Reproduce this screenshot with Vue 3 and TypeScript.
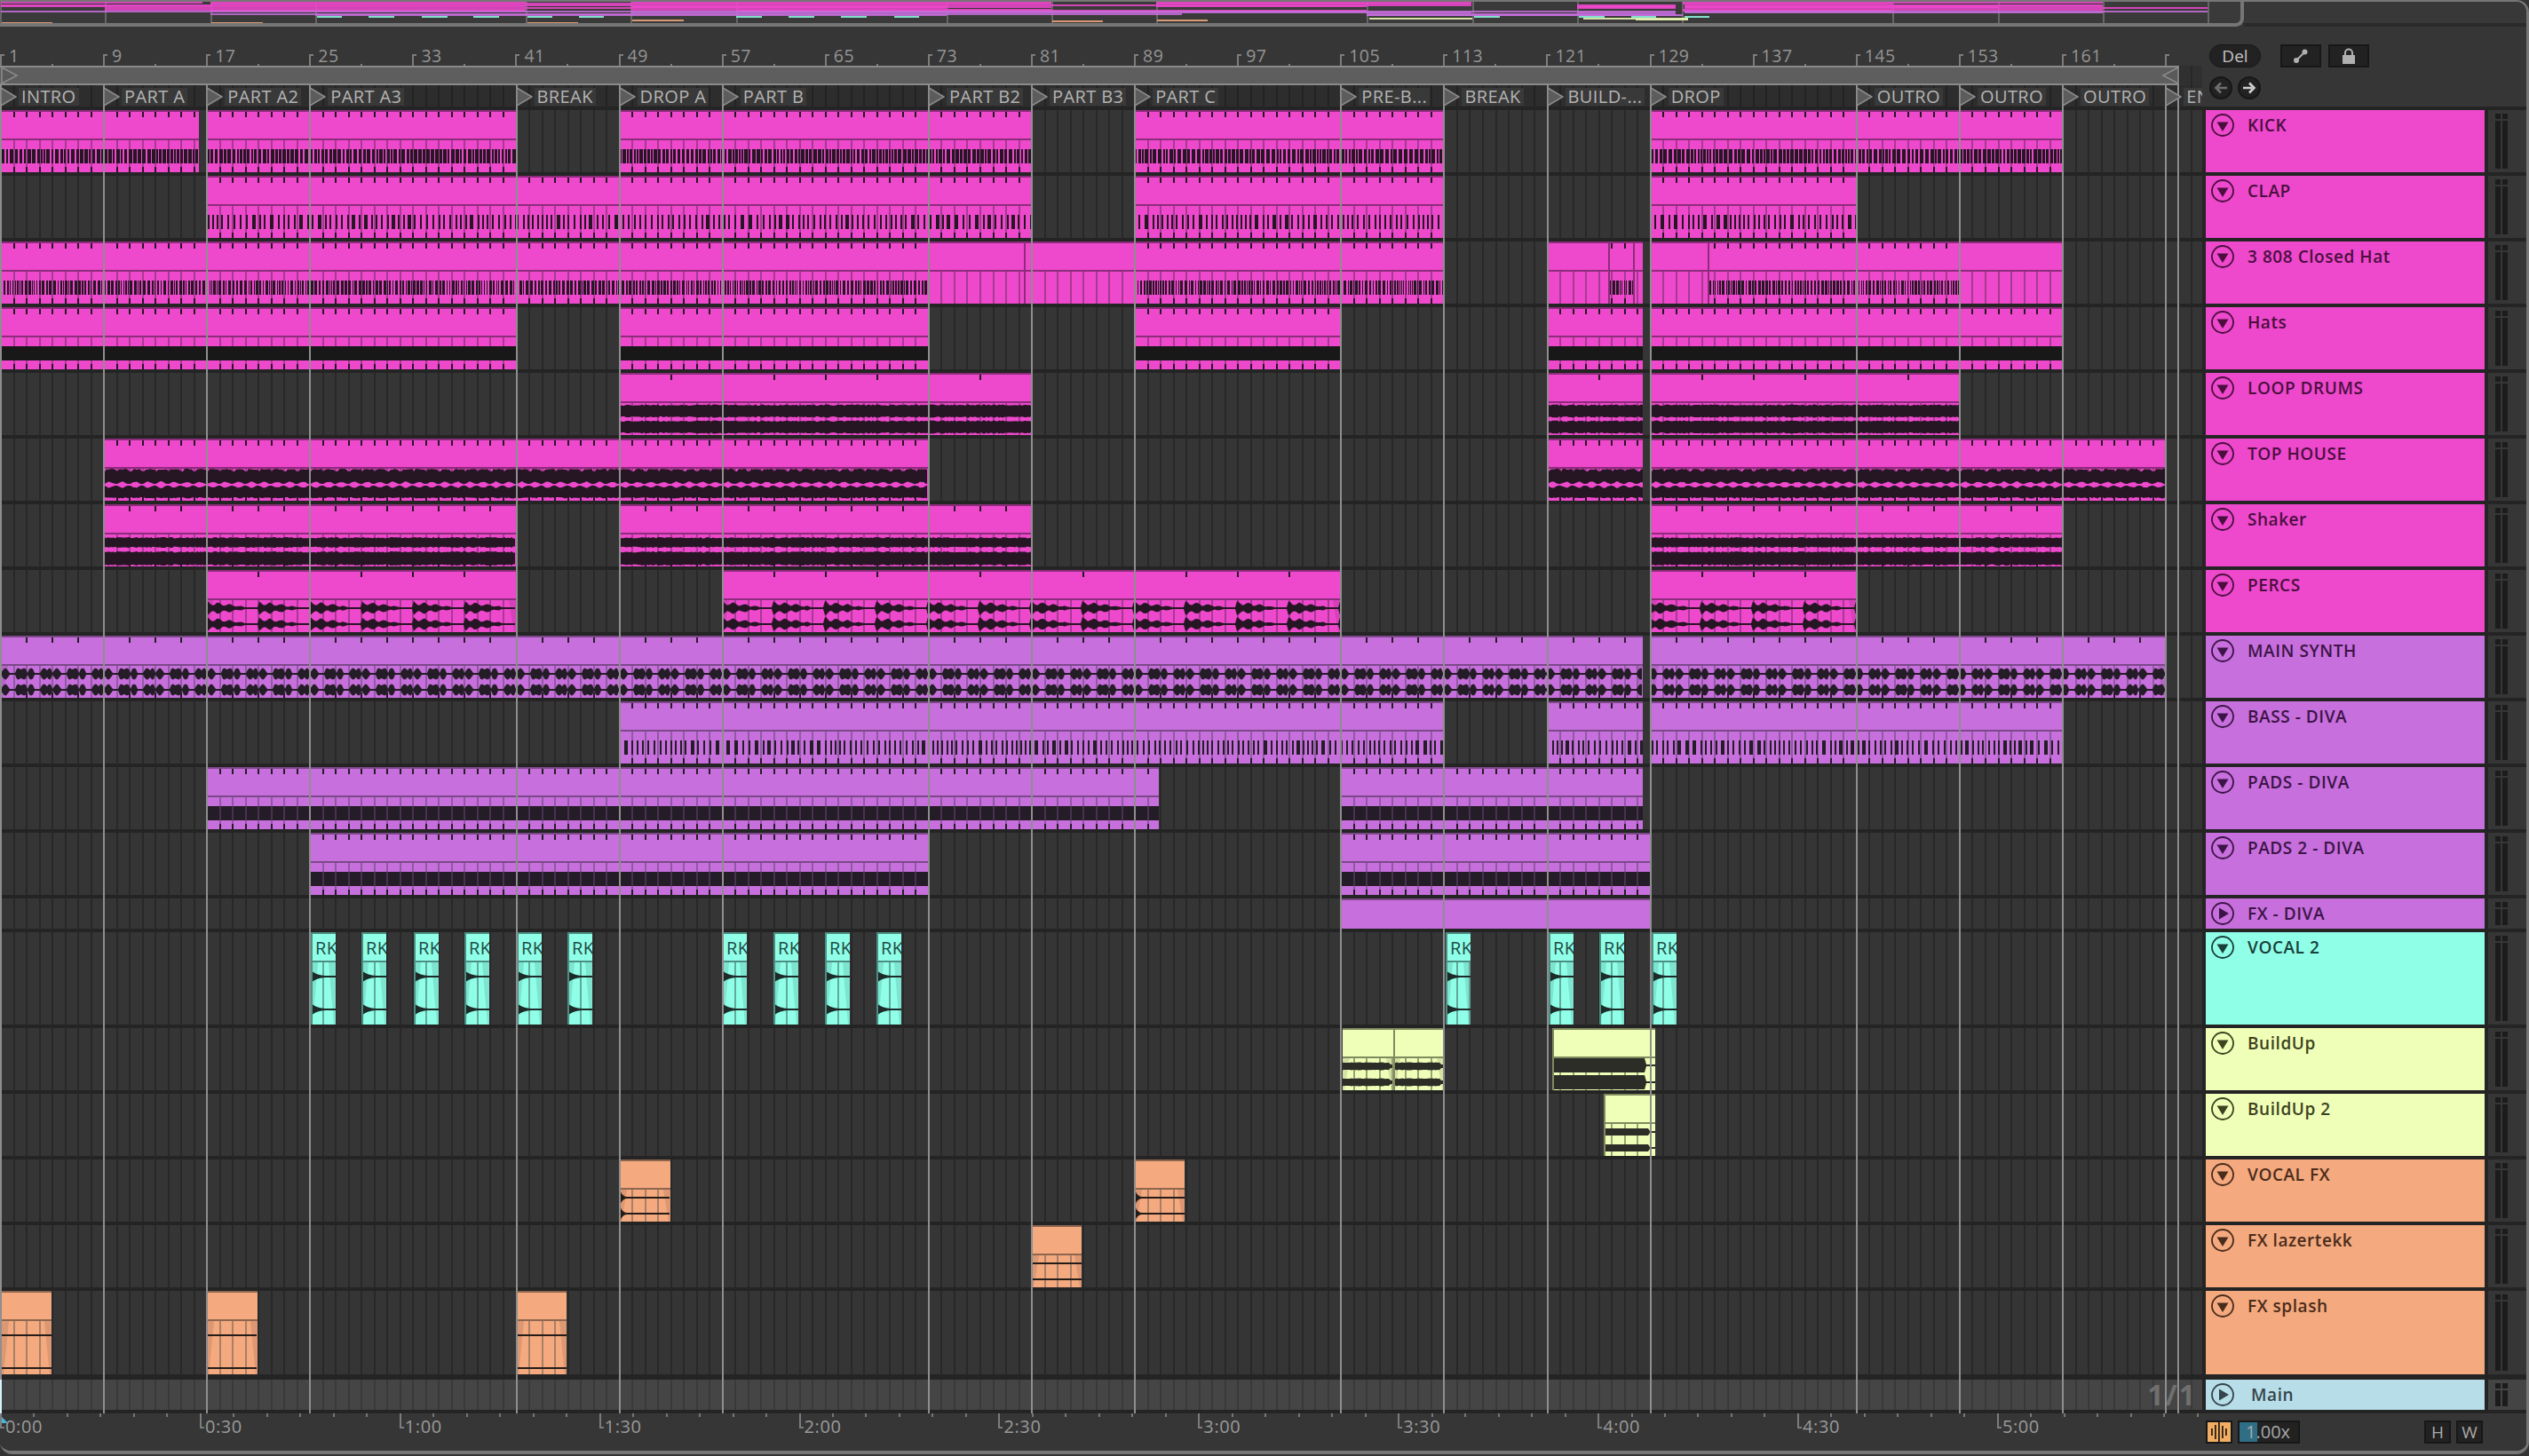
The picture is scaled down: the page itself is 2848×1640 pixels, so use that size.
<script setup lang="ts">
type Kind = 'none' | 'heavy' | 'dense' | 'sparse' | 'solid' | 'pads' | 'loop' | 'shaker' | 'top' | 'percs' | 'synth' | 'rk' | 'hit' | 'line' | 'build' | 'buildsolid' | 'build2'
interface ClipDef { a: number; b: number; kind: Kind; step: number; edge?: boolean; label?: string }
interface TrackDef { name: string; color: string; h: number; open?: boolean; clips: ClipDef[] }

const BAR = 14.513
const X = (bar: number) => BAR * (bar - 1)
const G1 = 1850
const G2 = 1860
const c = (a: number, b: number, kind: Kind, step: number, edge = false, label = ''): ClipDef => ({ a, b, kind, step, edge, label })
const span = (list: [number, number][], kind: Kind, step: number) => list.map(([a, b]) => c(a, b, kind, step))

const rkStarts = [350, 407, 466, 523, 582, 639, 813, 871, 929, 987, 1628, 1744, 1801, 1860]

const trackDefs: TrackDef[] = [
  { name: 'KICK', color: 'pink', h: 70, clips: span([[X(1) + 1, 224], [X(17), X(41)], [X(49), X(81)], [X(89), X(113)], [X(129), X(161)]], 'heavy', 1) },
  { name: 'CLAP', color: 'pink', h: 70, clips: span([[X(17), X(81)], [X(89), X(113)], [X(129), X(145)]], 'sparse', 1) },
  { name: '3 808 Closed Hat', color: 'pink', h: 70, clips: [
    c(X(1) + 1, X(73), 'dense', 1), c(X(73), 1153, 'none', 0), c(1153, X(89), 'none', 0, true), c(X(89), X(113), 'dense', 1),
    c(X(121), 1811, 'none', 0), c(1811, 1839, 'dense', 1, true), c(1839, G1, 'none', 0, true),
    c(G2, 1923, 'none', 0), c(1923, X(153), 'dense', 1, true), c(X(153), X(161), 'none', 0)
  ] },
  { name: 'Hats', color: 'pink', h: 70, clips: span([[X(1) + 1, X(41)], [X(49), X(73)], [X(89), X(105)], [X(121), G1], [G2, X(161)]], 'solid', 1) },
  { name: 'LOOP DRUMS', color: 'pink', h: 70, clips: span([[X(49), X(81)], [X(121), G1], [G2, X(153)]], 'loop', 4) },
  { name: 'TOP HOUSE', color: 'pink', h: 70, clips: span([[X(9), X(73)], [X(121), G1], [G2, X(169)]], 'top', 1) },
  { name: 'Shaker', color: 'pink', h: 70, clips: span([[X(9), X(41)], [X(49), X(81)], [X(129), X(161)]], 'shaker', 2) },
  { name: 'PERCS', color: 'pink', h: 70, clips: span([[X(17), X(41)], [X(57), X(105)], [X(129), X(145)]], 'percs', 4) },
  { name: 'MAIN SYNTH', color: 'purple', h: 70, clips: span([[X(1) + 1, G1], [G2, X(169)]], 'synth', 2) },
  { name: 'BASS - DIVA', color: 'purple', h: 70, clips: span([[X(49), X(113)], [X(121), G1], [G2, X(161)]], 'sparse', 1) },
  { name: 'PADS - DIVA', color: 'purple', h: 70, clips: span([[X(17), 1305], [X(105), G1]], 'pads', 1) },
  { name: 'PADS 2 - DIVA', color: 'purple', h: 70, clips: span([[X(25), X(73)], [X(105), X(129)]], 'pads', 1) },
  { name: 'FX - DIVA', color: 'purple', h: 34, open: false, clips: span([[X(105), X(129)]], 'none', 8) },
  { name: 'VOCAL 2', color: 'cyan', h: 104, clips: rkStarts.map(s => c(s, s + 28, 'rk', 0, true, 'RK')) },
  { name: 'BuildUp', color: 'yellow', h: 70, clips: [c(1512, 1569, 'build', 0), c(1569, 1626, 'build', 0, true), c(1748, 1864, 'buildsolid', 0, true)] },
  { name: 'BuildUp 2', color: 'yellow', h: 70, clips: [c(1806, 1864, 'build2', 0, true)] },
  { name: 'VOCAL FX', color: 'orange', h: 70, clips: [c(X(49) + 1, 755, 'hit', 0), c(X(89) + 1, 1334, 'hit', 0)] },
  { name: 'FX lazertekk', color: 'orange', h: 70, clips: [c(X(81) + 1, 1218, 'line', 0)] },
  { name: 'FX splash', color: 'orange', h: 94, clips: [c(2, 58, 'line', 0), c(X(17) + 1, 290, 'line', 0), c(X(41) + 1, 638, 'line', 0)] }
]

const hash = (n: number) => {
  const s = Math.sin(n * 12.9898) * 43758.5453
  return s - Math.floor(s)
}

function stripes(a: number, w: number, y0: number, y1: number, seed: number, mode: 'heavy' | 'dense' | 'sparse') {
  let x = 0
  let d = ''
  while (x < w) {
    const r = hash(a + x + seed)
    const r2 = hash(a + x + seed + 7.3)
    let sw = 2
    let gap = 4
    if (mode === 'heavy') {
      sw = 2 + Math.floor(r * 3)
      gap = 1 + Math.floor(r2 * 1.6)
    } else if (mode === 'dense') {
      sw = 1 + Math.floor(r * 3)
      gap = 1 + Math.floor(r2 * 2)
    } else {
      sw = r > 0.78 ? 4 : 2
      gap = 3 + Math.floor(r2 * 3)
    }
    d += `M${x} ${y0}h${sw}V${y1}h${-sw}z`
    x += sw + gap
  }
  return d
}

function env(w: number, cy: number, f: (x: number) => number) {
  const top: string[] = []
  const bot: string[] = []
  for (let x = 0; x <= w; x += 2) {
    const v = f(x)
    top.push(`${x} ${(cy - v).toFixed(1)}`)
    bot.unshift(`${x} ${(cy + v).toFixed(1)}`)
  }
  return `M${top.join('L')}L${bot.join('L')}z`
}

function buildWave(cl: ClipDef, L: number, w: number, h: number, seed: number) {
  const tall = h > 80
  const c1 = tall ? 50 : 43
  const c2 = tall ? 87 : 61
  const jag = (x: number, m: number) => hash(L + x + seed) * m
  const both = (f: (x: number) => number) => env(w, c1, f) + env(w, c2, f)
  let wave = ''
  let over = ''
  switch (cl.kind) {
    case 'heavy': wave = stripes(L, w, 44, 60, seed, 'heavy'); break
    case 'dense': wave = stripes(L, w, 44, 60, seed, 'dense'); break
    case 'sparse': wave = stripes(L, w, 44, 60, seed, 'sparse'); break
    case 'solid':
    case 'pads': wave = `M0 44H${w}V60H0z`; break
    case 'loop': wave = both(x => 6 + jag(x, 1.6)); break
    case 'shaker':
      wave = env(w, 43, x => 4.5 + jag(x, 1.6)) + env(w, 61, x => 6.5 + jag(x, 1.6))
      break
    case 'top': {
      const t: string[] = []
      const bt: string[] = []
      for (let x = 0; x <= w; x += 2) {
        const p = (L + x) % BAR
        t.push(`${x} ${(34 + (p < 3 ? 3 : jag(x, 1))).toFixed(1)}`)
        bt.unshift(`${x} ${(66 + (p < 3 ? 0 : jag(x + 3, 1.5))).toFixed(1)}`)
      }
      wave = `M${t.join('L')}L${bt.join('L')}z`
      over = env(w, 52, x => {
        const p = (L + x) % BAR
        return 0.8 + 3.2 * Math.pow(Math.sin((p / BAR) * Math.PI), 2) * (0.6 + jag(x, 0.4))
      })
      break
    }
    case 'percs':
      wave = both(x => {
        const p = (L + x - 1) % 58
        const v = p < 46 ? 7.5 * Math.pow(1 - p / 46, 0.7) * (0.72 + 0.28 * Math.cos((p * 2 * Math.PI) / 13)) : 0
        return Math.max(1, v + jag(x, 0.6))
      })
      break
    case 'synth':
      wave = both(x => {
        const p = (L + x - 1) % 29
        let v = 1
        for (const cc of [5, 19.7, 26]) {
          const q = (p - cc) / 3.7
          if (Math.abs(q) < 1) v = Math.max(v, 6.5 * Math.sqrt(1 - q * q))
        }
        return v
      })
      break
    case 'rk': wave = both(x => Math.max(1, 7 * Math.exp(-x / 8))); break
    case 'hit': wave = both(x => Math.max(1, 9 * Math.exp(-x / 3))); break
    case 'line': wave = both(() => 1); break
    case 'build':
      wave = both(x => (x > w - 4 ? 2 : 3.8 + jag(x, 0.8)))
      break
    case 'buildsolid':
      wave = env(w, 42, x => (x > w - 12 ? 1 : 8)) + env(w, 61, x => (x > w - 12 ? 1 : 8))
      break
    case 'build2':
      wave = both(x => (x > w - 8 ? 1 : 4))
      break
  }
  return { wave, over }
}

const rows = (() => {
  let y = 124
  return trackDefs.map((t, ti) => {
    const top = y
    y += t.h + (t.name === 'FX splash' ? 6 : 4)
    const clips = t.clips.map((cl, ci) => {
      const L = Math.round(cl.a)
      const w = Math.round(cl.b) - L
      let grid = ''
      let ticks = ''
      for (let k = 1; k <= 170; k++) {
        const px = Math.round(X(k)) + 1 - L
        if (px < 1 || px >= w) continue
        if (t.h > 40) grid += `M${px} 34V${t.h}`
        if (cl.step && (k - 1) % cl.step === 0) {
          ticks += `M${px} 2V8`
          if (cl.step <= 2 || t.h < 40) ticks += `M${px} ${t.h - 6}V${t.h}`
        }
      }
      const { wave, over } = buildWave(cl, L, w, t.h, ti * 31)
      const fades = ['percs', 'synth', 'rk', 'hit', 'line', 'build'].includes(cl.kind)
      const fw = 8
      const fade = fades && t.h > 40
        ? `M0 34H${fw}L2 ${t.h}H0zM${w} 34H${w - fw}L${w - 2} ${t.h}H${w}z`
        : ''
      return { key: `${ti}-${ci}`, L, w, grid, ticks, wave, over, fade, label: cl.label, edge: !!cl.edge, pads: cl.kind === 'pads', black: cl.kind === 'solid', tall: t.h > 40 }
    })
    return { ...t, top, clips }
  })
})()

const OV = 14.8 / BAR
const ovX = (px: number) => px * OV
const mini = rows.flatMap(r =>
  r.clips.map(cl => ({
    key: cl.key,
    color: r.color,
    left: ovX(cl.L),
    width: cl.w * OV,
    top: (r.top - 124) * 0.017,
    height: Math.max(r.h > 60 ? 2 : 1, r.h * 0.017)
  }))
)

const markers = [
  [1, 'INTRO'], [9, 'PART A'], [17, 'PART A2'], [25, 'PART A3'], [41, 'BREAK'], [49, 'DROP A'], [57, 'PART B'],
  [73, 'PART B2'], [81, 'PART B3'], [89, 'PART C'], [105, 'PRE-B...'], [113, 'BREAK'], [121, 'BUILD-...'],
  [129, 'DROP'], [145, 'OUTRO'], [153, 'OUTRO'], [161, 'OUTRO'], [169, 'END']
].map(([bar, label]) => ({ bar: bar as number, label: label as string, x: X(bar as number) }))

const lineXs = [...markers.map(m => m.x), 2452]
const bars = Array.from({ length: 22 }, (_, i) => 1 + i * 8)
const times = ['0:00', '0:30', '1:00', '1:30', '2:00', '2:30', '3:00', '3:30', '4:00', '4:30', '5:00']
const iconBars = [8, 16, 22, 14, 8]
</script>

<template>
  <div class="app">
    <div class="overview">
      <div class="mini">
        <i v-for="m in markers" :key="m.bar" class="mini-line" :style="{ left: ovX(m.x) + 'px' }"></i>
        <i
          v-for="m in mini"
          :key="m.key"
          class="mini-clip"
          :class="'c-' + m.color"
          :style="{ left: m.left + 'px', width: m.width + 'px', top: m.top + 'px', height: m.height + 'px' }"
        ></i>
      </div>
      <div class="mini-rest"></div>
    </div>

    <div class="body">
      <div class="arr">
        <div class="ruler">
          <div v-for="b in bars" :key="b" class="rcell">{{ b < 169 ? b : '' }}</div>
        </div>
        <div class="loopwrap">
          <div class="loop">
            <svg class="brace-l" width="20" height="18" viewBox="0 0 20 18"><path d="M1 0L18 9L1 18z" /></svg>
            <svg class="brace-r" width="20" height="18" viewBox="0 0 20 18"><path d="M19 0L2 9L19 18z" /></svg>
          </div>
        </div>
        <div class="timeline">
          <div class="markers">
            <div v-for="m in markers" :key="m.bar" class="mk" :style="{ left: m.x + 'px' }">
              <svg class="flag" width="19" height="22" viewBox="0 0 19 22"><path d="M1 1L18 11L1 21z" /></svg>
              <span class="mk-label">{{ m.label }}</span>
            </div>
          </div>
          <div class="lanes">
            <div v-for="r in rows" :key="r.name" class="lane" :style="{ height: r.h + 'px' }">
              <div
                v-for="cl in r.clips"
                :key="cl.key"
                class="clip"
                :class="'c-' + r.color"
                :style="{ left: cl.L + 'px', width: cl.w + 'px' }"
              >
                <svg class="clip-svg" :width="cl.w" :height="r.h">
                  <path class="fade" :d="cl.fade" />
                  <path class="grid" :d="cl.grid" />
                  <path class="wave" :class="{ black: cl.black }" :d="cl.wave" />
                  <path class="over" :d="cl.over" />
                  <path v-if="cl.pads" class="grid soft" :d="cl.grid" />
                  <path class="tick" :d="cl.ticks" />
                  <path class="bord" :d="`M0 1H${cl.w}` + (cl.tall ? `M0 33H${cl.w}` : '')" />
                  <path v-if="cl.edge" class="bord" :d="`M1 0V${r.h}`" />
                </svg>
                <span v-if="cl.label" class="clip-label">{{ cl.label }}</span>
              </div>
            </div>
            <div class="lane main-lane">
              <span class="sig">1/1</span>
            </div>
          </div>
          <i v-for="x in lineXs" :key="x" class="vline" :style="{ left: x + 'px' }"></i>
          <i class="playstrip"></i>
        </div>
        <div class="timeruler">
          <i class="playhead"></i>
          <div v-for="t in times" :key="t" class="tcell">{{ t }}</div>
        </div>
      </div>

      <div class="side">
        <div class="controls">
          <div class="ctl-row">
            <span class="pill">Del</span>
            <span class="sq first">
              <svg width="20" height="20" viewBox="0 0 20 20"><path d="M5 15L14 6" stroke="#b0b0b0" stroke-width="2" /><circle cx="5" cy="15" r="3" fill="#b0b0b0" /><circle cx="14.5" cy="5.5" r="3" fill="#b0b0b0" /></svg>
            </span>
            <span class="sq">
              <svg width="20" height="20" viewBox="0 0 20 20"><path d="M6 9V6.5a4 4 0 0 1 8 0V9" fill="none" stroke="#b0b0b0" stroke-width="2" /><rect x="3" y="9" width="14" height="10" fill="#b0b0b0" /></svg>
            </span>
          </div>
          <div class="ctl-row nav">
            <span class="round">
              <svg width="18" height="18" viewBox="0 0 18 18"><path d="M16 9H6M9 3.5L3.5 9L9 14.5" fill="none" stroke="#707070" stroke-width="2.6" /></svg>
            </span>
            <span class="round">
              <svg width="18" height="18" viewBox="0 0 18 18"><path d="M2 9H12M9 3.5L14.5 9L9 14.5" fill="none" stroke="#d0d0d0" stroke-width="2.6" /></svg>
            </span>
          </div>
        </div>
        <div class="heads">
          <div v-for="r in rows" :key="r.name" class="row" :style="{ height: r.h + 'px' }">
            <div class="thead" :class="'c-' + r.color">
              <svg class="fold" width="26" height="26" viewBox="0 0 26 26">
                <circle cx="13" cy="13" r="12" fill="none" stroke="currentColor" stroke-width="1.8" />
                <path v-if="r.open === false" d="M9 6.5L20 13L9 19.5z" fill="currentColor" />
                <path v-else d="M6.5 9.5H19.5L13 20z" fill="currentColor" />
              </svg>
              <span class="tname">{{ r.name }}</span>
            </div>
            <div class="mz">
              <div v-for="n in 2" :key="n" class="mcol"><b></b><b></b></div>
            </div>
          </div>
          <div class="row main-row">
            <div class="thead c-blue">
              <svg class="fold" width="26" height="26" viewBox="0 0 26 26">
                <circle cx="13" cy="13" r="12" fill="none" stroke="currentColor" stroke-width="1.8" />
                <path d="M9 6.5L20 13L9 19.5z" fill="currentColor" />
              </svg>
              <span class="tname main-name">Main</span>
            </div>
            <div class="mz">
              <div v-for="n in 2" :key="n" class="mcol"><b></b><b></b></div>
            </div>
          </div>
        </div>
        <div class="foot">
          <div class="foot-l">
            <span class="wavebtn">
              <svg width="26" height="22" viewBox="0 0 26 22">
                <rect v-for="(v, i) in iconBars" :key="i" :x="4 + i * 4" :y="11 - v / 2" width="1.8" :height="v" fill="#2a2016" />
              </svg>
            </span>
            <span class="zoomv"><i class="zoomfill"></i><span class="zoomtxt">1.00x</span></span>
          </div>
          <div class="foot-r">
            <span class="hw">H</span>
            <span class="hw">W</span>
          </div>
        </div>
      </div>
    </div>
  </div>
</template>

<style scoped>
.app {
  box-sizing: border-box;
  width: 2848px;
  height: 1638px;
  background: #363636;
  border-top: 2px solid #767676;
  border-right: 3px solid #767676;
  border-bottom: 4px solid #767676;
  border-radius: 0 14px 14px 14px;
  overflow: hidden;
  display: flex;
  flex-direction: column;
  font-family: "Open Sans", "Liberation Sans", sans-serif;
}
.c-pink { --c: #ee48cc; --d: #8d2c7b; --l: #a63a92; --ink: #261624; --txt: #4a0f3f; }
.c-purple { --c: #c76fdc; --d: #7c4889; --l: #8f5aa2; --ink: #241c26; --txt: #3c1448; }
.c-cyan { --c: #8fffe8; --d: #4d8e82; --l: #62a89b; --ink: #1d2a28; --txt: #1b3f39; }
.c-yellow { --c: #f0ffb8; --d: #7f8a5f; --l: #9aa275; --ink: #2c2d26; --txt: #3e4220; }
.c-orange { --c: #f4a97e; --d: #8e6650; --l: #a97f66; --ink: #241c18; --txt: #4a2c1c; }
.c-blue { --c: #b7dde8; --txt: #35434a; }

.overview { display: flex; height: 28px; flex: none; }
.mini {
  position: relative;
  box-sizing: border-box;
  width: 2527px;
  height: 28px;
  background: #3a3a3a;
  border-bottom: 4px solid #767676;
  border-right: 4px solid #767676;
  border-bottom-right-radius: 9px;
  overflow: hidden;
  flex: none;
}
.mini-line { position: absolute; top: 0; width: 2px; height: 24px; background: #666; }
.mini-clip { position: absolute; background: var(--c); opacity: 0.85; }
.mini-rest { flex: 1; box-sizing: border-box; border-bottom: 4px solid #2a2a2a; background: #383838; }

.body { flex: 1; display: flex; min-height: 0; }
.arr { width: 2480px; flex: none; display: flex; flex-direction: column; overflow: hidden; background: #242424; }

.ruler {
  height: 44px;
  flex: none;
  display: flex;
  align-items: flex-end;
  background: #363636;
}
.rcell {
  position: relative;
  flex: none;
  width: 116.1px;
  height: 22px;
  box-sizing: border-box;
  padding-left: 10px;
  font-size: 19.5px;
  line-height: 22px;
  letter-spacing: 0.5px;
  color: #949494;
}
.rcell::before {
  content: "";
  position: absolute;
  left: 0;
  bottom: 0;
  width: 3px;
  height: 11px;
  border-left: 2px solid #7c7c7c;
  border-top: 2px solid #7c7c7c;
}
.rcell::after {
  content: "";
  position: absolute;
  left: 58px;
  bottom: 0;
  width: 2px;
  height: 2px;
  background: #7c7c7c;
}

.loopwrap {
  height: 22px;
  flex: none;
  background: repeating-linear-gradient(90deg, #272727 0 2px, #303030 2px 14.513px);
}
.loop {
  position: relative;
  box-sizing: border-box;
  width: 2454px;
  height: 22px;
  background: #5e5e5e;
  border-top: 2px solid #8a8a8a;
  border-bottom: 2px solid #8a8a8a;
}
.brace-l { position: absolute; left: 1px; top: 0; }
.brace-r { position: absolute; right: 0; top: 0; }
.brace-l path, .brace-r path { fill: #5a5a5a; stroke: #8a8a8a; stroke-width: 1.6; }

.timeline { position: relative; flex: 1; display: flex; flex-direction: column; min-height: 0; }
.markers {
  position: relative;
  height: 24px;
  flex: none;
  margin-bottom: 4px;
  background: repeating-linear-gradient(90deg, #232323 0 2px, #2d2d2d 2px 14.513px);
}
.mk { position: absolute; top: 2px; height: 22px; display: flex; align-items: center; z-index: 3; white-space: nowrap; }
.flag { flex: none; }
.flag path { fill: #5c5c5c; stroke: #8c8c8c; stroke-width: 1.6; }
.mk-label {
  margin-left: 2px;
  padding: 0 3px;
  height: 20px;
  background: #393939;
  color: #b4b4b4;
  font-size: 20px;
  line-height: 20px;
  letter-spacing: 0.4px;
}

.lanes { display: flex; flex-direction: column; gap: 4px; padding-bottom: 4px; }
.lane {
  position: relative;
  flex: none;
  background: repeating-linear-gradient(90deg, #282828 0 2px, #353535 2px 14.513px);
}
.main-lane {
  height: 34px;
  margin-top: 2px;
  background: repeating-linear-gradient(90deg, #393939 0 2px, #454545 2px 14.513px);
}
.sig {
  position: absolute;
  right: 6px;
  top: -5px;
  font-size: 32px;
  line-height: 44px;
  font-weight: 700;
  letter-spacing: 2px;
  color: #6f6f6f;
}
.clip { position: absolute; top: 0; height: 100%; background: var(--c); overflow: hidden; }
.clip-svg { display: block; }
.grid { fill: none; stroke: var(--l); stroke-width: 2; shape-rendering: crispEdges; }
.grid.soft { opacity: 0.35; }
.wave { fill: var(--ink); }
.wave.black { fill: #181818; }
.over { fill: var(--c); }
.fade { fill: var(--d); opacity: 0.25; }
.tick { fill: none; stroke: var(--ink); stroke-width: 2; shape-rendering: crispEdges; }
.bord { fill: none; stroke: var(--d); stroke-width: 2; shape-rendering: crispEdges; }
.clip-label {
  position: absolute;
  left: 5px;
  top: 4px;
  font-size: 20px;
  line-height: 27px;
  letter-spacing: 0.5px;
  color: #1f4a44;
}
.vline { position: absolute; top: 0; bottom: 0; width: 2px; background: #8e8e8e; z-index: 2; }
.playstrip { position: absolute; left: 0; bottom: 0; width: 2px; height: 38px; background: #d8f4fa; z-index: 2; }

.timeruler {
  position: relative;
  height: 42px;
  flex: none;
  display: flex;
  background: repeating-linear-gradient(90deg, #777 0 2px, transparent 2px 37.48px) 0 0 / 100% 4px no-repeat, #363636;
}
.playhead {
  position: absolute;
  left: 0;
  top: 2px;
  width: 0;
  height: 0;
  border-left: 9px solid #4ab8d8;
  border-top: 9px solid transparent;
}
.tcell {
  position: relative;
  flex: none;
  width: 224.9px;
  box-sizing: border-box;
  padding-left: 6px;
  font-size: 20px;
  line-height: 30px;
  letter-spacing: 0.6px;
  color: #9a9a9a;
}
.tcell::before {
  content: "";
  position: absolute;
  left: 0;
  top: 0;
  width: 3px;
  height: 15px;
  border-left: 2px solid #7c7c7c;
  border-bottom: 2px solid #7c7c7c;
}

.side { flex: 1; display: flex; flex-direction: column; background: #242424; min-width: 0; }
.controls {
  box-sizing: border-box;
  height: 90px;
  flex: none;
  padding: 20px 0 0 8px;
  margin-bottom: 4px;
  background: #363636;
  display: flex;
  flex-direction: column;
  gap: 10px;
}
.ctl-row { display: flex; align-items: center; gap: 8px; }
.ctl-row.nav { gap: 6px; }
.pill {
  width: 58px;
  height: 26px;
  border-radius: 13px;
  background: #222;
  border: 1px solid #171717;
  box-sizing: border-box;
  display: flex;
  align-items: center;
  justify-content: center;
  color: #c4c4c4;
  font-size: 19px;
}
.sq {
  box-sizing: border-box;
  width: 46px;
  height: 26px;
  background: #222;
  border: 2px solid #171717;
  display: flex;
  align-items: center;
  justify-content: center;
}
.sq.first { margin-left: 14px; }
.round {
  box-sizing: border-box;
  width: 26px;
  height: 26px;
  border-radius: 50%;
  background: #222;
  border: 2px solid #171717;
  display: flex;
  align-items: center;
  justify-content: center;
}
.heads { display: flex; flex-direction: column; gap: 4px; padding-bottom: 4px; padding-left: 4px; flex: none; }
.row { display: flex; flex: none; }
.main-row { height: 34px; margin-top: 2px; }
.thead {
  box-sizing: border-box;
  flex: none;
  width: 314px;
  background: var(--c);
  color: var(--txt);
  display: flex;
  align-items: flex-start;
  padding: 4px 0 0 6px;
  gap: 15px;
}
.fold { flex: none; display: block; }
.tname { font-size: 19px; line-height: 26px; font-weight: 600; letter-spacing: 0.55px; white-space: nowrap; }
.main-name { margin-left: 4px; }
.mz {
  flex: 1;
  margin-left: 4px;
  background: #363636;
  box-sizing: border-box;
  padding: 4px 0 4px 8px;
  display: flex;
  gap: 2px;
}
.main-row .mz { background: #444; }
.mcol { width: 6px; display: flex; flex-direction: column; gap: 2px; }
.mcol b { display: block; background: #1c1c1c; }
.mcol b:first-child { height: 6px; flex: none; }
.mcol b:last-child { flex: 1; }

.foot {
  flex: 1;
  background: #363636;
  box-sizing: border-box;
  padding: 8px 49px 0 4px;
  display: flex;
  justify-content: space-between;
  align-items: flex-start;
}
.foot-l, .foot-r { display: flex; gap: 6px; }
.wavebtn {
  box-sizing: border-box;
  width: 30px;
  height: 26px;
  background: #f1ae63;
  border: 2px solid #171717;
  display: flex;
  align-items: center;
  justify-content: center;
}
.zoomv {
  position: relative;
  box-sizing: border-box;
  width: 70px;
  height: 26px;
  background: #222;
  border: 2px solid #171717;
  display: flex;
  align-items: center;
}
.zoomfill { position: absolute; left: 0; top: 0; bottom: 0; width: 20px; background: #2f6e85; }
.zoomtxt { position: relative; margin-left: 7px; color: #a9a9a9; font-size: 20px; line-height: 22px; }
.hw {
  box-sizing: border-box;
  width: 30px;
  height: 26px;
  background: #222;
  border: 2px solid #171717;
  display: flex;
  align-items: center;
  justify-content: center;
  color: #aaa;
  font-size: 19px;
}
</style>

<style>
html, body { background: #333; margin: 0; }
</style>
